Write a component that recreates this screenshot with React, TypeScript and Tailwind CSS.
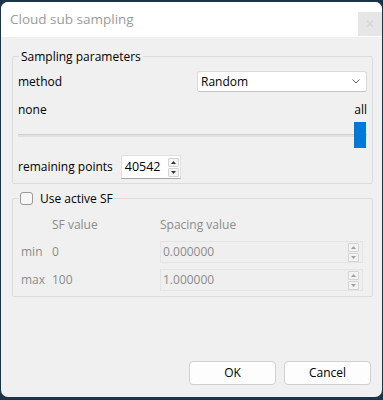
import React from "react";

const SpinArrows = ({ disabled }: { disabled?: boolean }) => {
  const c = disabled ? "#a0a0a0" : "#333";
  return (
    <div className="flex flex-col w-[11px] h-[19px] gap-[1px]">
      <div className="flex-1 flex items-center justify-center border border-[#d4d4d4] bg-[#f3f3f3] rounded-[1px]">
        <svg width="5" height="3" viewBox="0 0 5 3">
          <path d="M0 3 L2.5 0 L5 3 Z" fill={c} />
        </svg>
      </div>
      <div className="flex-1 flex items-center justify-center border border-[#d4d4d4] bg-[#f3f3f3] rounded-[1px]">
        <svg width="5" height="3" viewBox="0 0 5 3">
          <path d="M0 0 L2.5 3 L5 0 Z" fill={c} />
        </svg>
      </div>
    </div>
  );
};

const App = () => {
  return (
    <div
      className="w-[383px] h-[400px] bg-[#1d3447] pt-[2px] pl-[1px] overflow-hidden"
      style={{ fontFamily: '"Open Sans", "Noto Sans", sans-serif' }}
    >
      <div className="w-[381px] h-[395px] rounded-[7px] overflow-hidden flex flex-col bg-[#f0f0f0]">
        {/* title bar */}
        <div className="h-[35px] bg-white flex items-center justify-between pl-[9px]">
          <span className="text-[13.5px] text-[#9b9b9b]">Cloud sub sampling</span>
          <div className="w-[24px] h-[24px] mt-[8px] bg-[#e6e6e6] flex items-center justify-center text-[#d2d2d2] text-[14px]">
            ×
          </div>
        </div>

        {/* body */}
        <div className="flex-1 flex flex-col px-[11px] text-[12px] text-black">
          <fieldset className="mt-[11px] border border-[#dcdcdc] rounded-[2px] px-[5px] pb-[4px] w-[361px]">
            <legend className="ml-[1px] px-[2px] leading-[17px]">Sampling parameters</legend>
            <div className="flex items-center justify-between mt-[6px] h-[21px]">
              <span>method</span>
              <div className="w-[170px] h-[21px] bg-white border border-[#dadada] border-b-[#c4c4c4] rounded-[3px] flex items-center justify-between pl-[3px] pr-[6px]">
                <span>Random</span>
                <svg width="8" height="5" viewBox="0 0 8 5">
                  <path d="M0.5 0.5 L4 4 L7.5 0.5" stroke="#606060" strokeWidth="1" fill="none" />
                </svg>
              </div>
            </div>
            <div className="flex items-center justify-between mt-[9px] leading-[17px]">
              <span>none</span>
              <span>all</span>
            </div>
            <div className="relative h-[26px] mt-[4px] flex items-center">
              <div className="w-full h-[3px] bg-[#e2e2e2] border-t border-[#cfcfcf]" />
              <div className="absolute right-[1px] top-0 w-[12px] h-[26px] bg-[#0078d7]" />
            </div>
            <div className="flex items-center mt-[7px] h-[24px] gap-[8px]">
              <span>remaining points</span>
              <div className="h-[24px] w-[60px] bg-white border border-[#e0e0e0] border-b-[#a8a8a8] flex items-center justify-between pl-[3px] pr-[1px]">
                <span className="text-[12.5px]">40542</span>
                <SpinArrows />
              </div>
            </div>
          </fieldset>

          <fieldset className="mt-[6px] border border-[#dcdcdc] rounded-[2px] pl-[8px] pr-[9px] pb-[5px] w-[361px] text-[#8c8c8c]">
            <legend className="-ml-[2px] px-[1px] flex items-center gap-[7px] leading-[17px]">
              <span className="w-[13px] h-[13px] border border-[#9a9a9a] rounded-[3px] bg-[#f7f7f7]" />
              <span className="text-black">Use active SF</span>
            </legend>
            <div className="grid grid-cols-[31px_108px_1fr] items-center mt-[9px]">
              <span />
              <span className="leading-[17px]">SF value</span>
              <span className="leading-[17px]">Spacing value</span>

              <span className="mt-[8px]">min</span>
              <span className="mt-[8px]">0</span>
              <div className="mt-[8px] h-[22px] border border-[#e4e4e4] bg-[#efefef] flex items-center justify-between pl-[2px] pr-[3px]">
                <span>0.000000</span>
                <SpinArrows disabled />
              </div>

              <span className="mt-[6px]">max</span>
              <span className="mt-[6px]">100</span>
              <div className="mt-[6px] h-[22px] border border-[#e4e4e4] bg-[#efefef] flex items-center justify-between pl-[2px] pr-[3px]">
                <span>1.000000</span>
                <SpinArrows disabled />
              </div>
            </div>
          </fieldset>

          <div className="mt-auto mb-[12px] flex justify-end gap-[8px]">
            <button className="w-[87px] h-[24px] bg-[#fdfdfd] border border-[#d0d0d0] rounded-[4px]">OK</button>
            <button className="w-[87px] h-[24px] bg-[#fdfdfd] border border-[#d0d0d0] rounded-[4px]">Cancel</button>
          </div>
        </div>
      </div>
    </div>
  );
};

export default App;
